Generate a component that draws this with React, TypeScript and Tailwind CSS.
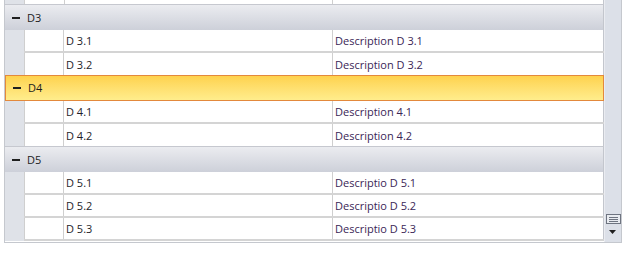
import React from "react";

function Minus() {
  return <div className="w-[8px] h-[2px] bg-[#1f1f1f]" />;
}

function GroupRow({ label, selected }: { label: string; selected?: boolean }) {
  if (selected) {
    return (
      <div className="flex items-center h-[26px] w-[599px] border border-[#e3893c] bg-gradient-to-b from-[#fed24c] to-[#ffed8c]">
        <div className="w-[20px] flex justify-center pl-[1px]">
          <Minus />
        </div>
        <span className="pl-[2px] pt-[1px] text-[11px] text-[#1c1c1c]">{label}</span>
      </div>
    );
  }
  return (
    <div className="flex items-center h-[26px] w-[599px] border-t border-r border-t-[#c6c8cf] border-r-[#c3c6cd] bg-gradient-to-b from-[#ebecf0] to-[#cdd0d9]">
      <div className="w-[21px] flex justify-center pl-[1px]">
        <Minus />
      </div>
      <span className="pl-[1px] pt-[1px] text-[11px] text-[#1c1c1c]">{label}</span>
    </div>
  );
}

function DataRow({ c1, c2, last }: { c1: string; c2: string; last?: boolean }) {
  return (
    <div className={last ? "flex h-[22px] w-[599px]" : "flex h-[23px] w-[599px]"}>
      <div className="w-[19px] bg-[#dfe2e8]" />
      <div className={last ? "flex flex-1" : "flex flex-1 border-b-2 border-[#d4d4d4]"}>
        <div className="w-[39px] border-l border-[#cfcfcf] bg-white" />
        <div className="w-[269px] border-l border-[#cfcfcf] bg-white pl-[2px] pt-[2px] flex items-center text-[11px] text-[#1e1e2a]">
          {c1}
        </div>
        <div className="w-[272px] border-l border-r border-l-[#cfcfcf] border-r-[#c3c6cd] bg-white pl-[2px] pt-[2px] flex items-center text-[11px] text-[#3a2656]">
          {c2}
        </div>
      </div>
    </div>
  );
}

export default function App() {
  return (
    <div className="w-[624px] h-[273px] bg-white font-['Open_Sans',sans-serif] overflow-hidden">
      <div className="ml-[4px] w-[618px] flex border-l border-r border-b border-[#c5c8ce]">
        <div className="flex flex-col w-[599px]">
          {/* partial top row */}
          <div className="flex h-[4px] w-[599px]">
            <div className="w-[19px] bg-[#dfe2e8]" />
            <div className="w-[40px] border-l border-[#cfcfcf] bg-white" />
            <div className="w-[269px] border-l border-[#cfcfcf] bg-white" />
            <div className="w-[272px] border-l border-r border-l-[#cfcfcf] border-r-[#c3c6cd] bg-white" />
          </div>
          <GroupRow label="D3" />
          <DataRow c1="D 3.1" c2="Description D 3.1" />
          <DataRow c1="D 3.2" c2="Description D 3.2" last />
          <GroupRow label="D4" selected />
          <DataRow c1="D 4.1" c2="Description 4.1" />
          <DataRow c1="D 4.2" c2="Description 4.2" last />
          <GroupRow label="D5" />
          <DataRow c1="D 5.1" c2="Descriptio D 5.1" />
          <DataRow c1="D 5.2" c2="Descriptio D 5.2" />
          <DataRow c1="D 5.3" c2="Descriptio D 5.3" />
          <div className="h-[1px] bg-white" />
        </div>
        <div className="w-[17px] bg-[#dce0e8] border-l border-[#eaecf1] flex flex-col items-center justify-end pb-[7px]">
          <div className="w-[15px] h-[10px] border border-[#6e7480] bg-[#e8ebf0] flex flex-col justify-center gap-[1px] px-[2px]">
            <div className="h-[1px] bg-[#6e7480]" />
            <div className="h-[1px] bg-[#6e7480]" />
            <div className="h-[1px] bg-[#6e7480]" />
          </div>
          <svg width="8" height="5" viewBox="0 0 8 5" className="mt-[6px]">
            <path d="M0 0 H7 L3.5 4 Z" fill="#1f1f1f" />
          </svg>
        </div>
      </div>
    </div>
  );
}
